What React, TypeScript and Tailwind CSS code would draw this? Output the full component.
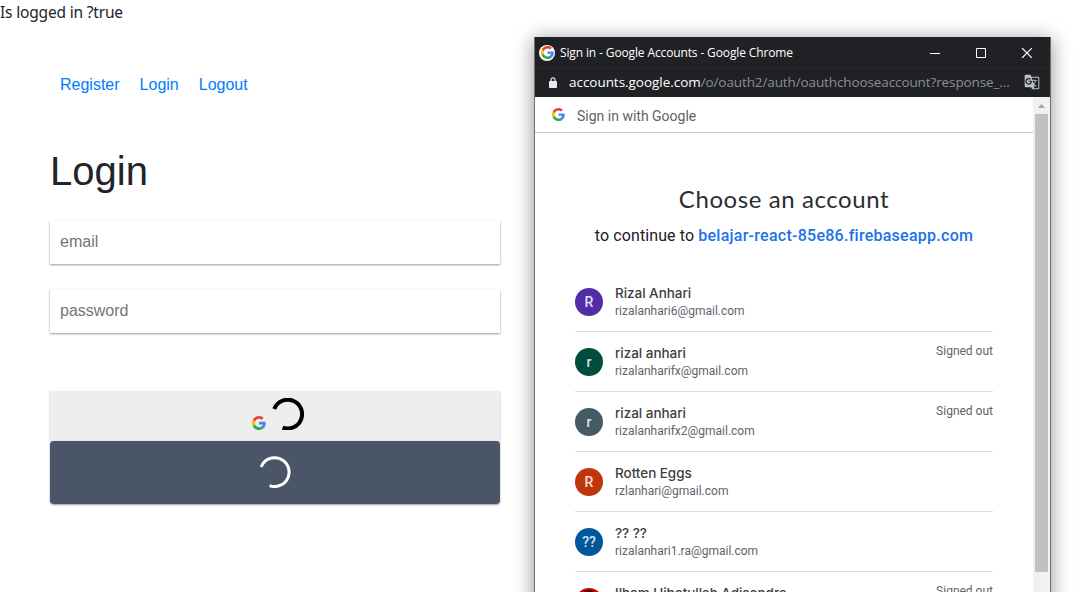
import { MdGTranslate } from 'react-icons/md';

type Account = {
  initial: string;
  name: string;
  email: string;
  color: string;
  signedOut?: boolean;
};

const accounts: Account[] = [
  { initial: 'R', name: 'Rizal Anhari', email: 'rizalanhari6@gmail.com', color: 'bg-[#512da8]' },
  { initial: 'r', name: 'rizal anhari', email: 'rizalanharifx@gmail.com', color: 'bg-[#004d40]', signedOut: true },
  { initial: 'r', name: 'rizal anhari', email: 'rizalanharifx2@gmail.com', color: 'bg-[#455a64]', signedOut: true },
  { initial: 'R', name: 'Rotten Eggs', email: 'rzlanhari@gmail.com', color: 'bg-[#bf360c]' },
  { initial: '??', name: '?? ??', email: 'rizalanhari1.ra@gmail.com', color: 'bg-[#01579b]' },
  { initial: '', name: 'Ilham Hibatullah Adisendra', email: '', color: 'bg-[#d50000]', signedOut: true },
];

function GoogleLogo({ className }: { className: string }) {
  return (
    <svg viewBox="0 0 48 48" className={className}>
      <path fill="#EA4335" d="M24 9.5c3.54 0 6.71 1.22 9.21 3.6l6.850-6.850C35.900 2.380 30.470 0 24 0 14.620 0 6.510 5.380 2.560 13.220l7.980 6.190C12.430 13.720 17.740 9.500 24 9.500z" />
      <path fill="#4285F4" d="M46.980 24.550c0-1.570-.15-3.090-.38-4.550H24v9.020h12.940c-.58 2.960-2.260 5.480-4.780 7.180l7.730 6c4.510-4.180 7.090-10.360 7.090-17.650z" />
      <path fill="#FBBC05" d="M10.530 28.590c-.48-1.450-.76-2.990-.76-4.590s.27-3.140.76-4.590l-7.980-6.190C.92 16.460 0 20.120 0 24c0 3.880.92 7.540 2.560 10.780l7.970-6.190z" />
      <path fill="#34A853" d="M24 48c6.480 0 11.930-2.130 15.890-5.810l-7.730-6c-2.150 1.450-4.920 2.300-8.160 2.300-6.260 0-11.570-4.220-13.470-9.910l-7.980 6.190C6.510 42.620 14.620 48 24 48z" />
    </svg>
  );
}

function LockIcon() {
  return (
    <svg viewBox="0 0 8 11" className="h-[11px] w-2 overflow-visible text-[#e8eaed]" fill="none">
      <path d="M2 5V2.800a2 2 0 0 1 4 0V5" stroke="currentColor" strokeWidth="1.2" />
      <rect x="0" y="4" width="8" height="7" rx="0.8" fill="currentColor" />
    </svg>
  );
}

function Spinner({ className, stroke }: { className: string; stroke: number }) {
  return (
    <svg viewBox="0 0 32 32" fill="none" stroke="currentColor" strokeWidth={stroke} className={className}>
      <path d="M2.2 11 A14.4 14.4 0 1 1 10.600 29.600" />
    </svg>
  );
}

function Field({ label, type }: { label: string; type: string }) {
  return (
    <input
      type={type}
      placeholder={label}
      className="h-11 w-full bg-white px-2.5 text-base placeholder-[#757575] shadow-[0_1px_2px_rgba(0,0,0,0.4)] outline-none"
    />
  );
}

function LoginPage() {
  return (
    <div className="w-[550px] text-[#212529]">
      <p className="h-6 whitespace-nowrap font-['Noto_Sans',sans-serif] text-[15.5px] leading-6 tracking-[-0.18px]">
        Is logged in ?true
      </p>
      <main className="flex flex-col px-[50px] pt-[49px] font-['Liberation_Sans',sans-serif]">
        <nav className="flex gap-5 px-2.5 leading-6 text-[#007bff]">
          <a>Register</a>
          <a>Login</a>
          <a>Logout</a>
        </nav>
        <h1 className="mt-[50px] text-[40px] leading-12">Login</h1>
        <div className="mt-[25px] flex flex-col gap-[25px]">
          <Field label="email" type="text" />
          <Field label="password" type="password" />
        </div>
        <button className="mt-[58px] flex h-[50px] justify-center bg-[#eee] pt-[7px] pl-1.5 shadow-[0_1px_2px_rgba(0,0,0,0.3)]">
          <GoogleLogo className="mt-[18px] size-3.5" />
          <Spinner className="ml-1.5 size-8 text-black" stroke={4} />
        </button>
        <button className="relative flex h-[63px] justify-center rounded bg-[#4a5568] pt-[15px] shadow-[0_1px_2px_rgba(0,0,0,0.4)]">
          <Spinner className="size-8 text-white" stroke={3} />
        </button>
      </main>
    </div>
  );
}

function WindowControls() {
  return (
    <svg viewBox="0 0 102 10" className="mr-[18px] ml-auto h-2.5 w-[102px]" fill="none" stroke="#fff">
      <path d="M0 5.5h10M46.5 .5h9v9h-9z" />
      <path d="M92 0l10 10M102 0L92 10" strokeWidth="1.2" />
    </svg>
  );
}

function AccountRow({ account }: { account: Account }) {
  return (
    <li className="flex h-[60px] shrink-0 border-b border-[#dadce0] pt-4">
      <div className={`flex size-7 shrink-0 items-center justify-center rounded-full text-sm font-medium text-white/85 ${account.color}`}>
        {account.initial || (
          <svg viewBox="0 0 28 28" className="size-7">
            <ellipse cx="14" cy="9" rx="8" ry="7" fill="#1c1416" />
          </svg>
        )}
      </div>
      <div className="-mt-1 ml-3">
        <p className="font-[Inter,sans-serif] text-[13.5px] leading-[18px] font-medium tracking-[-0.04px] whitespace-nowrap text-[#3c4043]">{account.name}</p>
        <p className="mt-px text-xs leading-4 whitespace-nowrap text-[#5f6368]">{account.email}</p>
      </div>
      {account.signedOut && <span className="-mt-[5px] ml-auto text-xs leading-4 text-[#5f6368]">Signed out</span>}
    </li>
  );
}

function Scrollbar() {
  return (
    <div className="flex w-[17px] shrink-0 flex-col items-center bg-[#f1f1f1]">
      <svg viewBox="0 0 17 17" className="size-[17px]">
        <path d="M5 11h7L8.500 7z" fill="#a3a3a3" />
      </svg>
      <div className="h-[458px] w-[13px] bg-[#c1c1c1]" />
    </div>
  );
}

function ChromeWindow() {
  return (
    <section className="absolute top-[37px] left-[534px] flex h-[620px] w-[517px] flex-col border-x border-[#6d6d6d] bg-white font-[Roboto,sans-serif] shadow-[0_3px_18px_1px_rgba(0,0,0,0.4)]">
      <header className="bg-[#202124] font-['Open_Sans',sans-serif]">
        <div className="flex h-[31px] items-center pl-1">
          <span className="flex size-4 items-center justify-center rounded-full bg-white">
            <GoogleLogo className="size-[13px]" />
          </span>
          <span className="ml-[5px] text-xs tracking-[-0.13px] whitespace-nowrap text-white">
            Sign in - Google Accounts - Google Chrome
          </span>
          <WindowControls />
        </div>
        <div className="flex h-[29px] items-center border-t border-[#292a2d] pb-0.5 pl-3.5">
          <LockIcon />
          <span className="ml-3 text-[13.5px] tracking-[-0.11px] whitespace-nowrap text-[#8b8f94]">
            <span className="tracking-[-0.04px] text-white">accounts.google.com</span>/o/oauth2/auth/oauthchooseaccount?response_...
          </span>
          <MdGTranslate className="mr-2.5 ml-auto size-4 shrink-0 text-[#bdc1c6]" />
        </div>
      </header>
      <div className="flex min-h-0 flex-1">
        <div className="flex min-w-0 flex-1 flex-col">
          <div className="flex h-9 shrink-0 items-center border-b border-[#c8c8c8] pl-[17px] text-sm text-[#5f6368]">
            <GoogleLogo className="size-[13px]" />
            <span className="ml-3 pt-0.5">Sign in with Google</span>
          </div>
          <h2 className="mt-[50px] text-center font-[Lato,sans-serif] text-2xl leading-8 tracking-[0.58px] text-[#2c2d30]">
            Choose an account
          </h2>
          <p className="mt-[9px] text-center text-base leading-6 tracking-[0.1px] text-[#202124]">
            to continue to <span className="font-medium tracking-[0.26px] text-[#1a73e8]">belajar-react-85e86.firebaseapp.com</span>
          </p>
          <ul className="mx-10 mt-6 flex flex-col">
            {accounts.map((account) => (
              <AccountRow key={account.color} account={account} />
            ))}
          </ul>
        </div>
        <Scrollbar />
      </div>
    </section>
  );
}

export default function App() {
  return (
    <div className="relative h-[592px] w-[1082px] overflow-hidden bg-white">
      <LoginPage />
      <ChromeWindow />
    </div>
  );
}
